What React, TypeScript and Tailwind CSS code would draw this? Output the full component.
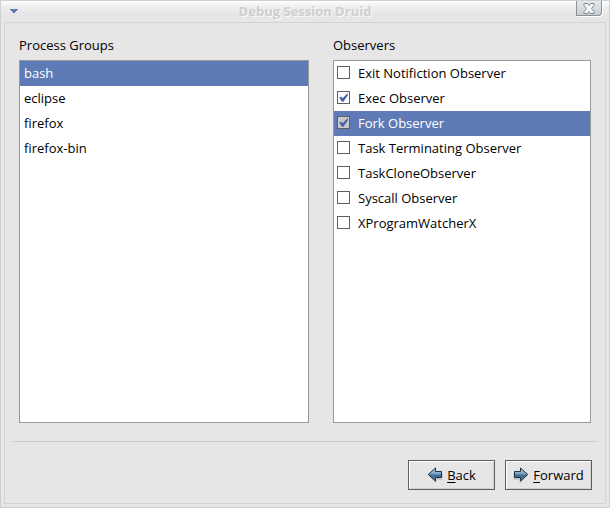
import { useState } from "react";

const groups = ["bash", "eclipse", "firefox", "firefox-bin"];

const observers = [
  { name: "Exit Notifiction Observer", on: false },
  { name: "Exec Observer", on: true },
  { name: "Fork Observer", on: true },
  { name: "Task Terminating Observer", on: false },
  { name: "TaskCloneObserver", on: false },
  { name: "Syscall Observer", on: false },
  { name: "XProgramWatcherX", on: false },
];

function TitleBar() {
  return (
    <header className="grid h-[21px] grid-cols-[1fr_auto_1fr] items-start bg-linear-to-b from-white from-0% via-[#f0f0f0] via-25% to-[#e6e6e6] to-60%">
      <button type="button" aria-label="Window menu" className="ml-[9px] mt-2 h-1 w-2 justify-self-start">
        <svg viewBox="0 0 8 4" className="block h-1 w-2" shapeRendering="crispEdges">
          <path d="M0 0h8v1H7v1H6v1H5v1H3V3H2V2H1V1H0z" fill="#5e7ab7" />
        </svg>
      </button>
      <h1 className="text-[13px] leading-5 font-bold text-[#cfcfcf] [text-shadow:1px_1px_0_#f8f8f8]">
        Debug Session Druid
      </h1>
      <button
        type="button"
        aria-label="Close"
        className="mr-[7px] flex h-[15px] w-[26px] items-center justify-center justify-self-end rounded-br-[4px] border border-t-0 border-[#8b9095] bg-linear-to-b from-[#e4e8eb] to-[#c6cdd2] shadow-[1px_1px_0_#ffffff]"
      >
        <svg viewBox="0 0 12 11" className="block h-[11px] w-3">
          <path
            d="M1 .5h3.5L6 2.5 7.500.5H11v2L8.500 5.500 11 8.500v2H7.500L6 8.500l-1.500 2H1v-2l2.500-3L1 2.500z"
            fill="#f3f5f6"
            stroke="#858a8e"
          />
        </svg>
      </button>
    </header>
  );
}

function Arrow({ id, flip }: { id: string; flip?: boolean }) {
  return (
    <svg viewBox="0 0 16 16" className={flip ? "size-4 -scale-x-100" : "size-4"} aria-hidden="true">
      <defs>
        <linearGradient id={id} x1="0" y1="0" x2="0" y2="1">
          <stop offset="0" stopColor="#b4cde2" />
          <stop offset="0.45" stopColor="#7ba2c6" />
          <stop offset="0.55" stopColor="#3f6b95" />
          <stop offset="1" stopColor="#5585b0" />
        </linearGradient>
      </defs>
      <path d="M2.500 9L8 15.800h1.500v-3h6V6z" fill="#000" opacity="0.14" />
      <path
        d="M1.200 7.500L8.500 1V4.500H14.500V10.500H8.500V14z"
        fill={`url(#${id})`}
        stroke="#20303f"
        strokeLinejoin="round"
      />
    </svg>
  );
}

function NavButton({ id, letter, rest, flip }: { id: string; letter: string; rest: string; flip?: boolean }) {
  return (
    <button
      type="button"
      className="flex h-[30px] w-[87px] items-center justify-center gap-1 border border-[#5f5f5f] bg-[#e6e6e6] shadow-[inset_1px_1px_0_#ffffff,inset_-1px_-1px_0_#d2d2d2]"
    >
      <Arrow id={id} flip={flip} />
      <span>
        <span className="underline underline-offset-2">{letter}</span>
        {rest}
      </span>
    </button>
  );
}

export default function App() {
  const [group, setGroup] = useState("bash");
  const [current, setCurrent] = useState("Fork Observer");
  const [checked, setChecked] = useState(observers.filter((o) => o.on).map((o) => o.name));

  const toggle = (name: string) => {
    setCurrent(name);
    setChecked((list) => (list.includes(name) ? list.filter((n) => n !== name) : [...list, name]));
  };

  return (
    <div className="flex min-h-screen flex-col border border-[#d0d0d0] bg-[#e6e6e6] font-['Open_Sans','Noto_Sans',sans-serif] text-[13px] leading-5 text-black">
      <TitleBar />
      <main className="mx-[3px] mb-[3px] flex flex-1 flex-col border border-[#d4d4d4] px-2 pb-[13px] pt-3">
        <div className="grid flex-1 grid-cols-[290fr_258fr] gap-6 px-[6px]">
          <section className="flex flex-col gap-[5px]">
            <h2 id="groups">Process Groups</h2>
            <ul aria-labelledby="groups" className="flex-1 border border-[#999999] bg-white">
              {groups.map((name) => (
                <li key={name}>
                  <button
                    type="button"
                    aria-pressed={name === group}
                    onClick={() => setGroup(name)}
                    className={`block h-[25px] w-full px-1 pb-[2px] text-left ${name === group ? "bg-[#5e7ab7] text-white" : ""}`}
                  >
                    {name}
                  </button>
                </li>
              ))}
            </ul>
          </section>
          <section className="flex flex-col gap-[5px]">
            <h2 id="observers">Observers</h2>
            <ul aria-labelledby="observers" className="flex-1 border border-[#999999] bg-white">
              {observers.map(({ name }) => (
                <li key={name}>
                  <label
                    className={`flex h-[25px] items-center gap-2 px-[3px] pb-[2px] ${name === current ? "bg-[#5e7ab7] text-white" : ""}`}
                  >
                    <span className="grid size-[13px] shrink-0">
                      <input
                        type="checkbox"
                        checked={checked.includes(name)}
                        onChange={() => toggle(name)}
                        className={`peer col-start-1 row-start-1 size-[13px] appearance-none border border-[#5f5f5f] ${name === current ? "bg-[#c8c8c8]" : "bg-white"}`}
                      />
                      <svg
                        viewBox="0 0 13 13"
                        aria-hidden="true"
                        className="pointer-events-none invisible col-start-1 row-start-1 size-[13px] peer-checked:visible"
                      >
                        <path d="M2.500 6.500L4.500 6L5.600 7.500L10.500 2.500V4.500L6.300 10.500H5z" fill="#3c5fae" stroke="#3c5fae" strokeWidth="0.4" />
                      </svg>
                    </span>
                    <span>{name}</span>
                  </label>
                </li>
              ))}
            </ul>
          </section>
        </div>
        <hr className="mt-[18px] border-t border-[#cccccc]" />
        <div className="mt-[18px] flex justify-end gap-[10px] pr-[5px]">
          <NavButton id="back-fill" letter="B" rest="ack" />
          <NavButton id="forward-fill" letter="F" rest="orward" flip />
        </div>
      </main>
    </div>
  );
}
